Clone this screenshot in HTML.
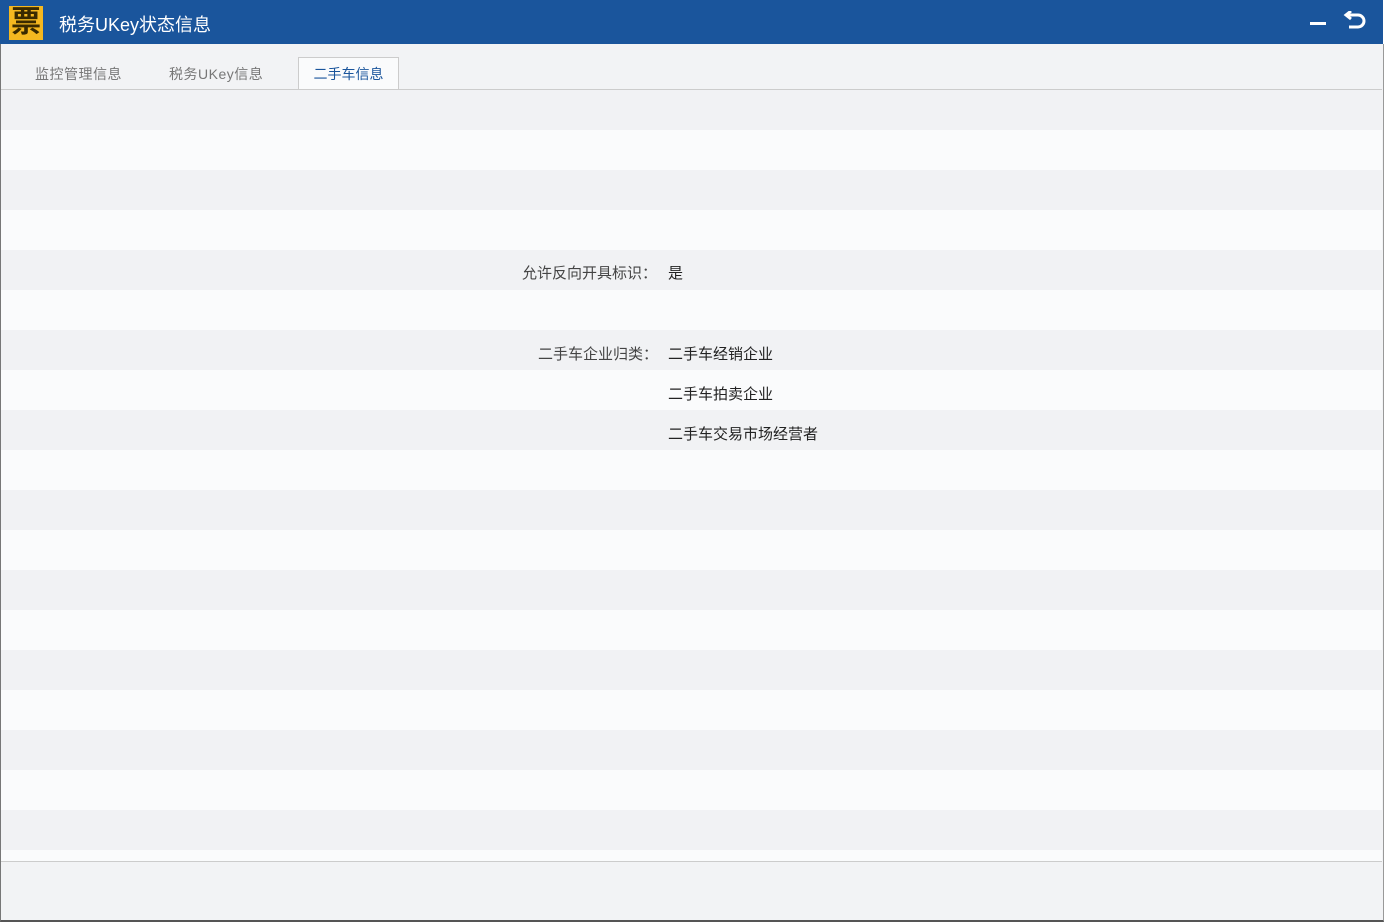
<!DOCTYPE html><html><head><meta charset="utf-8"><style>
body{margin:0;width:1386px;height:924px;overflow:hidden;background:#fff;font-family:"Liberation Sans","Noto Sans CJK SC",sans-serif;position:relative}
.title{position:absolute;left:0;top:0;width:1383px;height:44px;background:#1a559c}
.title .t{position:absolute;left:59px;top:11px;color:#fff;font-size:18px}
.logo{position:absolute;left:9px;top:6px;width:34px;height:34px;background:#f5b820;color:#3a2a00;font-size:30px;line-height:34px;text-align:center;font-weight:bold}
.win{position:absolute;left:0;top:44px;width:1382px;height:876px;background:#f2f3f5;border-left:1px solid #777;border-right:1px solid #999;border-bottom:2px solid #555}
.tab{position:absolute;top:26px;font-size:14px;color:#777;letter-spacing:0.5px}
.act{position:absolute;left:297px;top:13px;width:99px;height:32px;background:#fafbfc;border:1px solid #ccc;border-bottom:none;color:#1a559c;font-size:14px;text-align:center;line-height:32px}
.stripes{position:absolute;left:1px;top:89px;width:1381px;height:771px;border-top:1px solid #ccc;border-bottom:1px solid #ccc;background:repeating-linear-gradient(#f1f2f4 0 40px,#fafbfc 40px 80px)}
.l{position:absolute;font-size:15px;color:#444}
.v{position:absolute;font-size:15px;color:#222}
</style></head><body>
<div class="title"><div class="logo">票</div><div class="t">税务UKey状态信息</div>
<div style="position:absolute;left:1310px;top:22px;width:16px;height:3px;background:#fff"></div>
<svg style="position:absolute;left:1343px;top:11px" width="24" height="22" viewBox="0 0 24 22"><path d="M4 4h11a6 6 0 0 1 0 12H6" fill="none" stroke="#fff" stroke-width="3"/><path d="M8 0L3 4l5 4" fill="none" stroke="#fff" stroke-width="3"/></svg></div>
<div class="win">
<div class="tab" style="left:34px;top:20px">监控管理信息</div>
<div class="tab" style="left:168px;top:20px">税务UKey信息</div>
<div class="act">二手车信息</div>
</div>
<div class="stripes"></div>
<div class="l" style="left:522px;top:262px">允许反向开具标识：</div><div class="v" style="left:668px;top:262px">是</div>
<div class="l" style="left:538px;top:343px">二手车企业归类：</div><div class="v" style="left:668px;top:343px">二手车经销企业</div>
<div class="v" style="left:668px;top:383px">二手车拍卖企业</div>
<div class="v" style="left:668px;top:423px">二手车交易市场经营者</div>
</body></html>
